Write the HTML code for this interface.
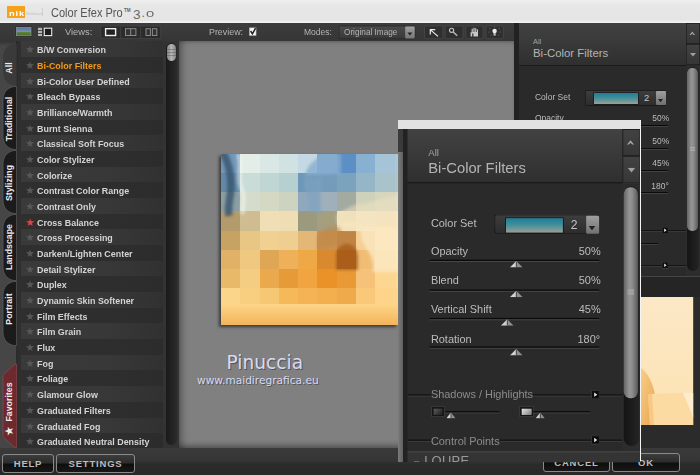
<!DOCTYPE html>
<html><head><meta charset="utf-8"><title>Color Efex Pro 3.0</title>
<style>
html,body{margin:0;padding:0;}
body{width:700px;height:475px;overflow:hidden;position:relative;background:#2a2a2a;font-family:"Liberation Sans",sans-serif;}
.abs{position:absolute;}
#title{left:0;top:0;width:700px;height:23.6px;background:linear-gradient(#efefef,#e7e7e7 25%,#e5e5e5 88%,#f2f2f2 96%);border-bottom:1.2px solid #141414;box-sizing:border-box}
#title .logo{left:7px;top:6px;width:18px;height:12px;background:#f5a21b;}
#title .logo span{position:absolute;left:1.8px;top:5px;color:#fff;font-size:6.4px;font-weight:bold;line-height:6px;letter-spacing:0.6px;transform:scaleX(1.45);transform-origin:0 0}
#title .sw{left:26px;top:10.5px;font-size:4.3px;color:#bcc4cc;line-height:6px}
#title .name{left:51.3px;top:3.6px;font-size:12.3px;line-height:18px;color:#555;white-space:nowrap;transform:scaleX(0.895);transform-origin:0 0}
#title .tm{left:124px;top:6.6px;font-size:4.6px;color:#666;line-height:7px;font-weight:bold}
#title .ver{left:133px;top:3.6px;color:#6a6a6a;white-space:nowrap;line-height:18px;font-size:12px}
#tool{left:0;top:23px;width:513.5px;height:18px;background:linear-gradient(#3c3c3c,#363636);}
.tl{position:absolute;top:26.4px;font-size:9.6px;color:#b4b4b4;white-space:nowrap;line-height:12px;transform-origin:0 0}
#tabs{left:0;top:41px;width:21px;height:409px;background:linear-gradient(#333,#464646 5px);}
.tabt{position:absolute;left:9.2px;transform:translate(-50%,-50%) rotate(-90deg);font-size:8.8px;font-weight:bold;color:#ececec;white-space:nowrap;line-height:10px}
.tab{position:absolute;left:3px;width:15px;background:#1c1c1c;border-radius:8px 0 0 8px;}
.tab span{position:absolute;left:50%;top:50%;transform:translate(-50%,-50%) rotate(-90deg);font-size:9.5px;font-weight:bold;color:#e8e8e8;white-space:nowrap}
#list{left:21px;top:41px;width:144px;height:409px;background:#333;overflow:hidden}
.row{position:absolute;left:21px;width:142px;height:15.68px;background:linear-gradient(90deg,#3a3a3a,#383838 60%,#313131);}
.row.alt{background:linear-gradient(90deg,#2f2f2f,#2e2e2e 60%,#2c2c2c)}
.row .st{position:absolute;left:4.3px;top:2px;font-size:10.5px;color:#585858;line-height:12px;font-family:"DejaVu Sans",sans-serif}
.row.fav .st{color:#d44}
.row .tx{position:absolute;left:16px;top:3px;font-size:9.7px;font-weight:bold;color:#d4d4d4;line-height:12px;white-space:nowrap;transform:scaleX(0.92);transform-origin:0 0}
.row.sel .tx{color:#f39a1b}
#lscroll{left:163px;top:41px;width:16px;height:407px;background:#333;}
#lscroll .trk{left:3px;top:2px;width:11px;height:402px;border-radius:5.5px;background:linear-gradient(90deg,#1a1a1a,#2a2a2a)}
#lscroll .th{left:3.8px;top:3px;width:9.4px;height:17px;border-radius:5px;background:linear-gradient(rgba(0,0,0,0) 5px,rgba(60,60,60,0.35) 5px,rgba(60,60,60,0.35) 6px,rgba(0,0,0,0) 6px,rgba(0,0,0,0) 8px,rgba(60,60,60,0.35) 8px,rgba(60,60,60,0.35) 9px,rgba(0,0,0,0) 9px,rgba(0,0,0,0) 11px,rgba(60,60,60,0.35) 11px,rgba(60,60,60,0.35) 12px,rgba(0,0,0,0) 12px),linear-gradient(90deg,#858585,#b4b4b4 50%,#858585)}
#prev{left:179px;top:41px;width:334.5px;height:407px;background:#808080;box-shadow:inset 7px 0 7px -4px rgba(0,0,0,0.33),inset 0 -6px 6px -4px rgba(0,0,0,0.4),inset 0 4px 5px -4px rgba(0,0,0,0.35)}
#bottom{left:0;top:448px;width:700px;height:27px;background:linear-gradient(#3a3a3a,#363636 45%,#2b2b2b 60%,#292929)}
.btn{position:absolute;height:17px;border:1px solid #8a8a8a;border-radius:3px;background:linear-gradient(#3c3c3c,#2c2c2c 48%,#0e0e0e 52%,#181818);color:#bbb;font-size:9.5px;font-weight:bold;text-align:center;line-height:17px;letter-spacing:0.8px;box-sizing:content-box}
.panel{position:absolute;left:0;top:0;background:#2a2a2a;}
.phead{background:linear-gradient(#424242,#383838 55%,#2f2f2f);border-bottom:1px solid #1a1a1a;box-sizing:border-box}
.pbtn{background:linear-gradient(#424242,#363636);box-shadow:inset 0 0 0 0.7px #1e1e1e}
.lb{position:absolute;left:19.8px;font-size:9.1px;transform:scaleX(0.93);transform-origin:0 0;color:#bcbcbc;line-height:12px;white-space:nowrap}
.lb.dim{color:#8c8c8c}
.lb.dim span{background:#2a2a2a}
.vl{position:absolute;right:30.8px;font-size:9.1px;transform:scaleX(0.93);transform-origin:100% 0;color:#bcbcbc;line-height:12px;white-space:nowrap;text-align:right}
.ln{position:absolute;left:19px;right:31.6px;height:0.8px;background:#0a0a0a;box-shadow:0 0.8px 0 #484848}
.tri{position:absolute;display:block}
.sep{height:0.8px;background:#141414;box-shadow:0 0.8px 0 #3c3c3c}
.dd{background:linear-gradient(#3e3e3e,#2c2c2c);border-radius:2px;box-shadow:inset 0 0 0 0.7px #161616}
.loupe{background:#fde9c4}
.tbtn{position:absolute;top:26px;height:13px;background:#2e2e2e;box-shadow:inset 0 0 0 1px #474747;border-radius:1px}
</style></head><body>
<div id="title" class="abs">
 <div class="abs logo"><span>nik</span></div><div class="abs sw">Software</div>
 <div class="abs" style="left:42px;top:8px;width:1px;height:8px;background:#d0d0d0"></div>
 <div class="abs name">Color Efex Pro</div><div class="abs tm">TM</div>
 <div class="abs ver"><span style="position:relative;top:2.4px;font-size:13.5px">3</span><span style="margin-left:1px">.</span><span style="font-size:9.8px;display:inline-block;transform:scaleX(1.5);transform-origin:0 50%;margin-left:1px">0</span></div>
</div>
<div id="tool" class="abs"></div>
<svg class="abs" style="left:0;top:23px" width="515" height="18" viewBox="0 23 515 18">
 <defs><linearGradient id="lg1" x1="0" y1="0" x2="0" y2="1"><stop offset="0" stop-color="#4b4b4b"/><stop offset="1" stop-color="#383838"/></linearGradient>
 <linearGradient id="lg2" x1="0" y1="0" x2="0" y2="1"><stop offset="0" stop-color="#a0a0a0"/><stop offset="1" stop-color="#767676"/></linearGradient>
 <linearGradient id="sky" x1="0" y1="0" x2="0" y2="1"><stop offset="0" stop-color="#58719c"/><stop offset="0.5" stop-color="#7890b4"/><stop offset="0.55" stop-color="#5e8838"/><stop offset="1" stop-color="#47692c"/></linearGradient></defs>
 <rect x="14.5" y="25.8" width="18.5" height="11.6" rx="1.5" fill="#2e2e2e" stroke="#454545" stroke-width="0.6"/>
 <rect x="16.5" y="27.5" width="14.5" height="8.2" fill="url(#sky)" stroke="#8c96a8" stroke-width="0.7"/>
 <g fill="#b4b4b4"><rect x="38" y="27.8" width="4" height="2.2"/><rect x="38" y="30.8" width="4" height="2.2"/><rect x="38" y="33.8" width="4" height="2.2"/></g>
 <rect x="44.3" y="28.2" width="7.4" height="7.4" fill="#1c1c1c" stroke="#e8e8e8" stroke-width="1.1"/>
 <rect x="100.7" y="26" width="60" height="12.6" rx="1.5" fill="#2b2b2b" stroke="#484848" stroke-width="0.8"/>
 <path d="M120.7 26.5V38.2M140.7 26.5V38.2" stroke="#484848" stroke-width="0.8"/>
 <rect x="105.6" y="28.7" width="10" height="6.8" fill="#222" stroke="#f0f0f0" stroke-width="1.4"/>
 <rect x="125.5" y="28.7" width="10.4" height="6.8" fill="#333" stroke="#8a8a8a" stroke-width="1"/><path d="M130.7 28.5V35.7" stroke="#8a8a8a" stroke-width="1"/>
 <rect x="146" y="28.7" width="4.4" height="6.8" fill="#333" stroke="#8a8a8a" stroke-width="1"/><rect x="152.4" y="28.7" width="4.4" height="6.8" fill="#333" stroke="#8a8a8a" stroke-width="1"/>
 <rect x="249.3" y="27.8" width="6.8" height="7.8" fill="#f4f4f4" stroke="#999" stroke-width="0.5"/>
 <path d="M250.6 31 L252.4 33.8 L255.6 28.2" fill="none" stroke="#222" stroke-width="1.5"/>
 <rect x="339" y="26" width="76" height="12.8" rx="1.5" fill="url(#lg1)" stroke="#2a2a2a" stroke-width="0.8"/>
 <rect x="405.2" y="26.4" width="9.5" height="12" rx="1" fill="url(#lg2)"/>
 <path d="M407.4 32.4 H412.4 L409.9 35.6Z" fill="#222"/>
 <g fill="#2f2f2f" stroke="#4a4a4a" stroke-width="0.8"><rect x="424.6" y="26" width="18.4" height="12.8" rx="1"/><rect x="445.2" y="26" width="17.8" height="12.8" rx="1"/><rect x="465.8" y="26" width="17.4" height="12.8" rx="1"/><rect x="486" y="26" width="17.4" height="12.8" rx="1"/></g>
 <path d="M438 36.4 L430.2 29.6 M430 29.6 H435.2 M430.3 29.2 V34.6" fill="none" stroke="#ececec" stroke-width="1.2"/>
 <circle cx="451.6" cy="30.3" r="2.1" fill="none" stroke="#c4c4c4" stroke-width="1.1"/><path d="M453.2 32 L457.2 35.8" stroke="#b8b8b8" stroke-width="1.5"/>
 <path d="M470.6 32 V36.4 H472.2 V33.6 H473.4 V36.4 H478 V30.2 Q478 29 477 29.2 V32 H476.4 V28.6 Q476 27.6 475.2 28.4 V32 H474.6 V28 Q474 27.2 473.4 28 V32 H472.8 V29 Q472.2 28.2 471.6 29 V32.6 Z" fill="#c8c8c8"/>
 <circle cx="494.6" cy="31" r="2.2" fill="#ececec"/><rect x="493.5" y="33" width="2.2" height="2.6" fill="#bdbdbd"/>
 <g fill="#707070"><circle cx="490" cy="28.6" r="0.6"/><circle cx="499.2" cy="28.6" r="0.6"/><circle cx="489" cy="32" r="0.6"/><circle cx="500.2" cy="32" r="0.6"/><circle cx="494.6" cy="27" r="0.5"/><circle cx="491" cy="35" r="0.5"/><circle cx="498.4" cy="35" r="0.5"/></g>
</svg>
<span class="tl" style="left:343.8px;color:#b4b4b4;transform:scaleX(0.855)">Original Image</span>
<span class="tl" style="left:64.8px;transform:scaleX(0.97)">Views:</span>
<span class="tl" style="left:209px;transform:scaleX(0.925)">Preview:</span>
<span class="tl" style="left:303.8px;transform:scaleX(0.885)">Modes:</span>
<div id="tabs" class="abs"></div>
<svg class="abs" style="left:0;top:41px" width="21" height="409" viewBox="0 41 21 409"><rect x="16.6" y="41" width="4.4" height="409" fill="#2f2f2f"/><rect x="16.4" y="41" width="0.8" height="409" fill="#242424"/><path d="M16.6 44.0 L14 44.0 C8 45.0 3 49.5 3 57.5 L3 72 C3 80 8 84.5 14 85.5 L16.6 85.5Z" fill="#3a3a3a" stroke="none" stroke-width="0.8"/><path d="M16.6 86.5 L14 86.5 C8 87.5 3 92 3 100 L3 136 C3 144 8 148.5 14 149.5 L16.6 149.5Z" fill="#1b1b1b" stroke="#585858" stroke-width="0.8"/><path d="M16.6 150.5 L14 150.5 C8 151.5 3 156 3 164 L3 200 C3 208 8 212.5 14 213.5 L16.6 213.5Z" fill="#1b1b1b" stroke="#585858" stroke-width="0.8"/><path d="M16.6 214.5 L14 214.5 C8 215.5 3 220 3 228 L3 267 C3 275 8 279.5 14 280.5 L16.6 280.5Z" fill="#1b1b1b" stroke="#585858" stroke-width="0.8"/><path d="M16.6 281.5 L14 281.5 C8 282.5 3 287 3 295 L3 332 C3 340 8 344.5 14 345.5 L16.6 345.5Z" fill="#1b1b1b" stroke="#585858" stroke-width="0.8"/><path d="M16.6 364 L14.5 364.5 L3.6 374.5 Q3 375.2 3 376.5 L3 435.5 Q3 436.8 3.8 437.5 L14.5 447 L16.6 447.5Z" fill="#6c2a2f" stroke="#87474b" stroke-width="0.8"/></svg>
<span class="tabt" style="top:67.5px">All</span><span class="tabt" style="top:119.1px">Traditional</span><span class="tabt" style="top:182.5px">Stylizing</span><span class="tabt" style="top:246.5px">Landscape</span><span class="tabt" style="top:308.8px">Portrait</span><span class="tabt" style="top:402.3px">Favorites</span><span class="tabt" style="top:431.3px;left:8.8px;font-size:11.5px;font-family:'DejaVu Sans',sans-serif;font-weight:normal">★</span>
<div id="list" class="abs"></div>
<div class="row" style="top:41.20px"><span class="st">★</span><span class="tx">B/W Conversion</span></div>
<div class="row alt sel" style="top:56.88px"><span class="st">★</span><span class="tx">Bi-Color Filters</span></div>
<div class="row" style="top:72.56px"><span class="st">★</span><span class="tx">Bi-Color User Defined</span></div>
<div class="row alt" style="top:88.24px"><span class="st">★</span><span class="tx">Bleach Bypass</span></div>
<div class="row" style="top:103.92px"><span class="st">★</span><span class="tx">Brilliance/Warmth</span></div>
<div class="row alt" style="top:119.60px"><span class="st">★</span><span class="tx">Burnt Sienna</span></div>
<div class="row" style="top:135.28px"><span class="st">★</span><span class="tx">Classical Soft Focus</span></div>
<div class="row alt" style="top:150.96px"><span class="st">★</span><span class="tx">Color Stylizer</span></div>
<div class="row" style="top:166.64px"><span class="st">★</span><span class="tx">Colorize</span></div>
<div class="row alt" style="top:182.32px"><span class="st">★</span><span class="tx">Contrast Color Range</span></div>
<div class="row" style="top:198.00px"><span class="st">★</span><span class="tx">Contrast Only</span></div>
<div class="row alt fav" style="top:213.68px"><span class="st">★</span><span class="tx">Cross Balance</span></div>
<div class="row" style="top:229.36px"><span class="st">★</span><span class="tx">Cross Processing</span></div>
<div class="row alt" style="top:245.04px"><span class="st">★</span><span class="tx">Darken/Lighten Center</span></div>
<div class="row" style="top:260.72px"><span class="st">★</span><span class="tx">Detail Stylizer</span></div>
<div class="row alt" style="top:276.40px"><span class="st">★</span><span class="tx">Duplex</span></div>
<div class="row" style="top:292.08px"><span class="st">★</span><span class="tx">Dynamic Skin Softener</span></div>
<div class="row alt" style="top:307.76px"><span class="st">★</span><span class="tx">Film Effects</span></div>
<div class="row" style="top:323.44px"><span class="st">★</span><span class="tx">Film Grain</span></div>
<div class="row alt" style="top:339.12px"><span class="st">★</span><span class="tx">Flux</span></div>
<div class="row" style="top:354.80px"><span class="st">★</span><span class="tx">Fog</span></div>
<div class="row alt" style="top:370.48px"><span class="st">★</span><span class="tx">Foliage</span></div>
<div class="row" style="top:386.16px"><span class="st">★</span><span class="tx">Glamour Glow</span></div>
<div class="row alt" style="top:401.84px"><span class="st">★</span><span class="tx">Graduated Filters</span></div>
<div class="row" style="top:417.52px"><span class="st">★</span><span class="tx">Graduated Fog</span></div>
<div class="row alt" style="top:433.20px"><span class="st">★</span><span class="tx">Graduated Neutral Density</span></div>
<div id="lscroll" class="abs"><div class="abs trk"></div><div class="abs th"></div></div>
<div id="prev" class="abs"></div>
<div class="abs" style="left:221px;top:154px;width:177px;height:171px;box-shadow:-2px 2px 3px rgba(0,0,0,0.55)"></div><svg class="abs" style="left:221px;top:154px" width="177" height="171" viewBox="0 0 177 171"><rect x="0" y="0" width="19.5" height="19.5" fill="#7297b8"/><rect x="19" y="0" width="20.5" height="19.5" fill="#e4eee8"/><rect x="39" y="0" width="19.5" height="19.5" fill="#dae8e5"/><rect x="58" y="0" width="19.5" height="19.5" fill="#d1e2e3"/><rect x="77" y="0" width="19.5" height="19.5" fill="#c4d9e3"/><rect x="96" y="0" width="20.5" height="19.5" fill="#82abcd"/><rect x="116" y="0" width="19.5" height="19.5" fill="#5c8fc3"/><rect x="135" y="0" width="19.5" height="19.5" fill="#88b0d0"/><rect x="154" y="0" width="20.5" height="19.5" fill="#a6c4d7"/><rect x="174" y="0" width="3.5" height="19.5" fill="#aac7d8"/><rect x="0" y="19" width="19.5" height="19.5" fill="#6489a8"/><rect x="19" y="19" width="20.5" height="19.5" fill="#cadcd8"/><rect x="39" y="19" width="19.5" height="19.5" fill="#c0d6d4"/><rect x="58" y="19" width="19.5" height="19.5" fill="#b6cfd1"/><rect x="77" y="19" width="19.5" height="19.5" fill="#6e98b7"/><rect x="96" y="19" width="20.5" height="19.5" fill="#739cba"/><rect x="116" y="19" width="19.5" height="19.5" fill="#7ca3bd"/><rect x="135" y="19" width="19.5" height="19.5" fill="#95b6c7"/><rect x="154" y="19" width="20.5" height="19.5" fill="#a8c4ca"/><rect x="174" y="19" width="3.5" height="19.5" fill="#abc6cc"/><rect x="0" y="38" width="19.5" height="19.5" fill="#8a9ea4"/><rect x="19" y="38" width="20.5" height="19.5" fill="#d6dccb"/><rect x="39" y="38" width="19.5" height="19.5" fill="#d5d9c4"/><rect x="58" y="38" width="19.5" height="19.5" fill="#cdd3c0"/><rect x="77" y="38" width="19.5" height="19.5" fill="#8fa8bc"/><rect x="96" y="38" width="20.5" height="19.5" fill="#9fb0ba"/><rect x="116" y="38" width="19.5" height="19.5" fill="#a3aaa0"/><rect x="135" y="38" width="19.5" height="19.5" fill="#cfd2bb"/><rect x="154" y="38" width="20.5" height="19.5" fill="#d6d6bd"/><rect x="174" y="38" width="3.5" height="19.5" fill="#dcd9c0"/><rect x="0" y="57" width="19.5" height="20.5" fill="#b39b6c"/><rect x="19" y="57" width="20.5" height="20.5" fill="#cfbd91"/><rect x="39" y="57" width="19.5" height="20.5" fill="#f0dfb6"/><rect x="58" y="57" width="19.5" height="20.5" fill="#efdeb4"/><rect x="77" y="57" width="19.5" height="20.5" fill="#9b9a7e"/><rect x="96" y="57" width="20.5" height="20.5" fill="#a59e7f"/><rect x="116" y="57" width="19.5" height="20.5" fill="#f5e1b6"/><rect x="135" y="57" width="19.5" height="20.5" fill="#fbe8c3"/><rect x="154" y="57" width="20.5" height="20.5" fill="#fae5bc"/><rect x="174" y="57" width="3.5" height="20.5" fill="#fbe8c0"/><rect x="0" y="77" width="19.5" height="19.5" fill="#c6a362"/><rect x="19" y="77" width="20.5" height="19.5" fill="#e8c684"/><rect x="39" y="77" width="19.5" height="19.5" fill="#f0d192"/><rect x="58" y="77" width="19.5" height="19.5" fill="#efcf91"/><rect x="77" y="77" width="19.5" height="19.5" fill="#e3b877"/><rect x="96" y="77" width="20.5" height="19.5" fill="#cc9050"/><rect x="116" y="77" width="19.5" height="19.5" fill="#c08444"/><rect x="135" y="77" width="19.5" height="19.5" fill="#f5cf94"/><rect x="154" y="77" width="20.5" height="19.5" fill="#fde8c0"/><rect x="174" y="77" width="3.5" height="19.5" fill="#fde9c2"/><rect x="0" y="96" width="19.5" height="19.5" fill="#e0b166"/><rect x="19" y="96" width="20.5" height="19.5" fill="#f0c981"/><rect x="39" y="96" width="19.5" height="19.5" fill="#dfa755"/><rect x="58" y="96" width="19.5" height="19.5" fill="#eeb058"/><rect x="77" y="96" width="19.5" height="19.5" fill="#eea845"/><rect x="96" y="96" width="20.5" height="19.5" fill="#d98a2f"/><rect x="116" y="96" width="19.5" height="19.5" fill="#b4661a"/><rect x="135" y="96" width="19.5" height="19.5" fill="#f1bd74"/><rect x="154" y="96" width="20.5" height="19.5" fill="#fde0a8"/><rect x="174" y="96" width="3.5" height="19.5" fill="#fee3ae"/><rect x="0" y="115" width="19.5" height="19.5" fill="#e9b96a"/><rect x="19" y="115" width="20.5" height="19.5" fill="#f4cd83"/><rect x="39" y="115" width="19.5" height="19.5" fill="#eaa94d"/><rect x="58" y="115" width="19.5" height="19.5" fill="#e59c38"/><rect x="77" y="115" width="19.5" height="19.5" fill="#f0a541"/><rect x="96" y="115" width="20.5" height="19.5" fill="#ea9128"/><rect x="116" y="115" width="19.5" height="19.5" fill="#e99a36"/><rect x="135" y="115" width="19.5" height="19.5" fill="#f6c279"/><rect x="154" y="115" width="20.5" height="19.5" fill="#fdd692"/><rect x="174" y="115" width="3.5" height="19.5" fill="#fdd896"/><rect x="0" y="134" width="19.5" height="19.5" fill="#fad58a"/><rect x="19" y="134" width="20.5" height="19.5" fill="#f8cf80"/><rect x="39" y="134" width="19.5" height="19.5" fill="#f7c873"/><rect x="58" y="134" width="19.5" height="19.5" fill="#f5b959"/><rect x="77" y="134" width="19.5" height="19.5" fill="#f4b455"/><rect x="96" y="134" width="20.5" height="19.5" fill="#f3ae4d"/><rect x="116" y="134" width="19.5" height="19.5" fill="#efaa4b"/><rect x="135" y="134" width="19.5" height="19.5" fill="#f9c878"/><rect x="154" y="134" width="20.5" height="19.5" fill="#fdd48a"/><rect x="174" y="134" width="3.5" height="19.5" fill="#fdd48c"/><rect x="0" y="153" width="19.5" height="18.5" fill="#f9c774"/><rect x="19" y="153" width="20.5" height="18.5" fill="#f9c774"/><rect x="39" y="153" width="19.5" height="18.5" fill="#f9c774"/><rect x="58" y="153" width="19.5" height="18.5" fill="#f9c774"/><rect x="77" y="153" width="19.5" height="18.5" fill="#f9c774"/><rect x="96" y="153" width="20.5" height="18.5" fill="#f9c774"/><rect x="116" y="153" width="19.5" height="18.5" fill="#f9c774"/><rect x="135" y="153" width="19.5" height="18.5" fill="#f9c774"/><rect x="154" y="153" width="20.5" height="18.5" fill="#f9c774"/><rect x="174" y="153" width="3.5" height="18.5" fill="#f9c774"/><defs><filter id="bl2" x="-30%" y="-30%" width="160%" height="160%"><feGaussianBlur stdDeviation="1.6"/></filter><filter id="bl1" x="-30%" y="-30%" width="160%" height="160%"><feGaussianBlur stdDeviation="0.9"/></filter>
<linearGradient id="botg" x1="0" y1="0" x2="0" y2="1"><stop offset="0" stop-color="#fdd58a"/><stop offset="1" stop-color="#f4b45a"/></linearGradient></defs>
<rect x="0" y="150" width="177" height="21" fill="url(#botg)"/>
<g filter="url(#bl2)">
<path d="M1 -3 C9 10 10 22 10 32 C10 44 6 52 8 62" fill="none" stroke="#38546f" stroke-width="7.5" opacity="0.82"/>
<path d="M17 0 C22 12 15 24 21 36 C25 46 20 54 22 60" fill="none" stroke="#f4f8f4" stroke-width="4" opacity="0.6"/>
<path d="M84 22 C86 10 96 4 104 0 L100 0 L120 0 L120 20 Z" fill="#86add0" opacity="0.8"/>
<path d="M84 24 C80 38 92 44 88 56 L100 60 L100 24Z" fill="#7fa2c0" opacity="0.7"/>
<path d="M116 60 C124 56 132 50 140 50 C150 50 156 44 177 42 L177 76 L124 76 C116 72 114 66 116 60Z" fill="#efe2c0" opacity="0.55"/>
<path d="M118 72 C128 66 140 68 140 80 C140 92 150 96 152 110 L152 118 L177 118 L177 72Z" fill="#fbe7c0" opacity="0.8"/>
<path d="M115 100 C117 86 137 86 137 104 L137 116 L115 116Z" fill="#a85c16" opacity="0.8"/>
<path d="M96 82 C100 74 112 70 120 74 L116 92 L96 96Z" fill="#c08848" opacity="0.6"/>
</g></svg>
<div class="abs" style="left:226.5px;top:350.5px;font-size:18.6px;color:#d9d9f2;font-family:'DejaVu Sans',sans-serif;text-shadow:1px 1px 0 #555;line-height:24px">Pinuccia</div>
<div class="abs" style="left:197px;top:372px;font-size:10.6px;color:#d9d9f2;font-family:'DejaVu Sans',sans-serif;text-shadow:1px 1px 0 #555;line-height:16px;white-space:nowrap">www.maidiregrafica.eu</div>
<div class="abs" style="left:513.5px;top:23px;width:2px;height:426px;background:#222"></div>
<div id="right" class="abs panelwrap" style="left:515px;top:23px;width:185.0px;height:452.0px;overflow:hidden">
<div class="panel" style="width:185px;height:452px;transform:scale(1);transform-origin:0 0">
 <div class="abs" style="left:0;top:0;width:3.5px;height:452px;background:#222"></div>
 <div class="abs phead" style="left:3.5px;top:0;width:167.1px;height:42.8px"></div>
 <div class="abs" style="left:18px;top:14.3px;font-size:7.4px;color:#a4a4a4;line-height:9px">All</div>
 <div class="abs" style="left:18px;top:23.3px;font-size:11.4px;color:#b4b4b4;line-height:15px;white-space:nowrap">Bi-Color Filters</div>
 <div class="abs pbtn" style="left:170.6px;top:0;width:14.4px;height:20.6px"><svg class="abs" style="left:3.9px;top:8px" width="6.6" height="4.4" viewBox="0 0 6.6 4.4"><path d="M0.3 4.4 L3.3 0.6 L6.3 4.4 L5 4.4 L3.3 2.6 L1.6 4.4Z" fill="#a8a8a8"/></svg></div>
 <div class="abs pbtn" style="left:170.6px;top:21.2px;width:14.4px;height:20.6px"><svg class="abs" style="left:4.2px;top:9px" width="6" height="3.6" viewBox="0 0 6 3.6"><path d="M0 0 L6 0 L3 3.6Z" fill="#a0a0a0"/></svg></div>
 <div class="abs" style="left:170.6px;top:42.5px;width:14.4px;height:210.5px;background:#2d2d2d"></div>
 <div class="abs" style="left:171.8px;top:44px;width:12px;height:203.5px;border-radius:6px;background:linear-gradient(90deg,#141414,#242424)"></div>
 <div class="abs" style="left:172.4px;top:45.2px;width:10.2px;height:162.5px;border-radius:5.1px;background:linear-gradient(90deg,#646464,#959595 40%,#8c8c8c 60%,#5a5a5a)"></div>
 <div class="abs" style="left:175.0px;top:124px;width:5px;height:0.6px;background:#aaa;box-shadow:0 1.5px 0 #aaa,0 3px 0 #aaa"></div>
 <div class="abs" style="left:0;top:1.1px;width:185px;height:0">
 <div class="lb" style="top:67px">Color Set</div>
 <div class="abs dd" style="left:69.5px;top:66.3px;width:81.7px;height:15.2px"></div>
 <div class="abs" style="left:78.9px;top:69.2px;width:44.5px;height:10.6px;background:linear-gradient(#1f7f98,#3a8c9c 40%,#9aa094);box-shadow:0 0 0 0.6px #111"></div>
 <div class="abs" style="left:129.0px;top:67.6px;font-size:9.4px;color:#c4c4c4;line-height:12px">2</div>
 <div class="abs" style="left:141.3px;top:67.2px;width:9.4px;height:13.6px;background:linear-gradient(#a0a0a0,#707070);border-radius:1px"><svg class="abs" style="left:2.2px;top:7.6px" width="5" height="3.4" viewBox="0 0 5 3.4"><path d="M0 0 L5 0 L2.5 3.4Z" fill="#222"/></svg></div>
 <div class="lb" style="top:88.3px">Opacity</div><div class="vl" style="top:88.3px">50%</div>
<div class="ln" style="top:100.7px"></div>
<svg class="tri" style="left:80.6px;top:102.1px" width="10" height="5" viewBox="0 0 9.4 5.4" preserveAspectRatio="none"><path d="M0 5.4 L4.7 0 L4.7 5.4Z" fill="#d0d0d0"/><path d="M4.7 0 L9.4 5.4 L4.7 5.4Z" fill="#909090"/><path d="M4.7 0.8V5.4" stroke="#222" stroke-width="0.5"/></svg>
 <div class="lb" style="top:111.1px">Blend</div><div class="vl" style="top:111.1px">50%</div>
<div class="ln" style="top:123.5px"></div>
<svg class="tri" style="left:80.6px;top:124.9px" width="10" height="5" viewBox="0 0 9.4 5.4" preserveAspectRatio="none"><path d="M0 5.4 L4.7 0 L4.7 5.4Z" fill="#d0d0d0"/><path d="M4.7 0 L9.4 5.4 L4.7 5.4Z" fill="#909090"/><path d="M4.7 0.8V5.4" stroke="#222" stroke-width="0.5"/></svg>
 <div class="lb" style="top:133.4px">Vertical Shift</div><div class="vl" style="top:133.4px">45%</div>
<div class="ln" style="top:145.8px"></div>
<svg class="tri" style="left:74.3px;top:147.2px" width="10" height="5" viewBox="0 0 9.4 5.4" preserveAspectRatio="none"><path d="M0 5.4 L4.7 0 L4.7 5.4Z" fill="#d0d0d0"/><path d="M4.7 0 L9.4 5.4 L4.7 5.4Z" fill="#909090"/><path d="M4.7 0.8V5.4" stroke="#222" stroke-width="0.5"/></svg>
 <div class="lb" style="top:155.9px">Rotation</div><div class="vl" style="top:155.9px">180°</div>
<div class="ln" style="top:168.3px"></div>
<svg class="tri" style="left:80.6px;top:169.7px" width="10" height="5" viewBox="0 0 9.4 5.4" preserveAspectRatio="none"><path d="M0 5.4 L4.7 0 L4.7 5.4Z" fill="#d0d0d0"/><path d="M4.7 0 L9.4 5.4 L4.7 5.4Z" fill="#909090"/><path d="M4.7 0.8V5.4" stroke="#222" stroke-width="0.5"/></svg>
 </div>
 <div class="abs" style="left:0;top:1.9000000000000001px;width:185px;height:0">
 <div class="abs sep" style="left:3.5px;top:205px;width:167.1px"></div>
 <div class="lb dim" style="top:199.4px"><span>Shadows / Highlights</span></div>
 <svg class="abs" style="left:146.8px;top:201.9px" width="6.2" height="6.6" viewBox="0 0 6.2 6.6"><rect width="6.2" height="6.6" fill="#0c0c0c" stroke="#4a4a4a" stroke-width="0.7"/><path d="M2.2 1.6 L4.6 3.3 L2.2 5Z" fill="#e8e8e8"/></svg>
 <div class="abs" style="left:20.9px;top:214.6px;width:9.6px;height:7.6px;background:linear-gradient(135deg,#5e5e5e,#1c1c1c);border:0.8px solid #141414;box-shadow:0 0 0 0.5px #484848;box-sizing:border-box"></div>
 <div class="abs" style="left:30.7px;top:218.2px;width:42px;height:0.8px;background:#0c0c0c;box-shadow:0 0.8px 0 #444"></div>
 <svg class="tri" style="left:32.3px;top:219.2px" width="7" height="4.6" viewBox="0 0 7 4.6"><path d="M0 4.6 L3.5 0 L3.5 4.6Z" fill="#d0d0d0"/><path d="M3.5 0 L7 4.6 L3.5 4.6Z" fill="#909090"/><path d="M3.5 0.8V4.6" stroke="#222" stroke-width="0.5"/></svg>
 <div class="abs" style="left:89.4px;top:214.6px;width:9.6px;height:7.6px;background:linear-gradient(135deg,#eaeaea,#7a7a7a);border:0.8px solid #141414;box-shadow:0 0 0 0.5px #484848;box-sizing:border-box"></div>
 <div class="abs" style="left:99px;top:218.2px;width:44.3px;height:0.8px;background:#0c0c0c;box-shadow:0 0.8px 0 #444"></div>
 <svg class="tri" style="left:100.5px;top:219.2px" width="7" height="4.6" viewBox="0 0 7 4.6"><path d="M0 4.6 L3.5 0 L3.5 4.6Z" fill="#d0d0d0"/><path d="M3.5 0 L7 4.6 L3.5 4.6Z" fill="#909090"/><path d="M3.5 0.8V4.6" stroke="#222" stroke-width="0.5"/></svg>
 <div class="abs sep" style="left:3.5px;top:240.2px;width:167.1px"></div>
 <div class="lb dim" style="top:234.5px"><span>Control Points</span></div>
 <svg class="abs" style="left:146.8px;top:237.1px" width="6.2" height="6.6" viewBox="0 0 6.2 6.6"><rect width="6.2" height="6.6" fill="#0c0c0c" stroke="#4a4a4a" stroke-width="0.7"/><path d="M2.2 1.6 L4.6 3.3 L2.2 5Z" fill="#e8e8e8"/></svg>
 </div>
 <div class="abs" style="left:3.5px;top:253px;width:181.5px;height:199.0px;background:#2b2b2b"></div>
 <div class="abs" style="left:3.5px;top:253px;width:181.5px;height:20.5px;background:linear-gradient(90deg,#343434 55%,#252525 68%);border-top:0.8px solid #454545;box-sizing:border-box"></div>
 <div class="abs" style="left:6.5px;top:260.8px;width:4.5px;height:1px;background:#aaa"></div>
 <div class="abs" style="left:14.8px;top:255.2px;font-size:10px;color:#999;line-height:12px;letter-spacing:0.2px">LOUPE</div>
 <svg class="abs" style="left:125.4px;top:273.5px" width="53.2" height="128.5" viewBox="0 0 53.2 128.5">
  <defs><linearGradient id="lpright" x1="0" y1="0" x2="0" y2="1"><stop offset="0" stop-color="#fbe8c6"/><stop offset="1" stop-color="#fde2b2"/></linearGradient>
  <linearGradient id="lqright" x1="0" y1="0" x2="1" y2="1"><stop offset="0" stop-color="#f8cf8a"/><stop offset="1" stop-color="#e9a650"/></linearGradient></defs>
  <rect width="53.2" height="128.5" fill="url(#lpright)"/>
  <path d="M0 70 C8 76 13 86 15 98 L15 128.5 L0 128.5Z" fill="url(#lqright)"/>
  <path d="M8 97 L43 96 L53.2 118 L53.2 128.5 L10 128.5Z" fill="#fbdba2"/>
  <path d="M43 96 L53.2 96 L53.2 120Z" fill="#fdeccd"/>
  <path d="M8 97 L12 97 L14 128.5 L10 128.5Z" fill="#f3c27a" opacity="0.7"/>
 </svg>
</div></div>
<div id="bottom" class="abs"></div>
<div class="btn" style="left:2px;top:454px;width:50px">HELP</div>
<div class="btn" style="left:56px;top:454px;width:77px">SETTINGS</div>
<div class="btn" style="left:543px;top:453px;width:65px">CANCEL</div>
<div class="btn" style="left:612px;top:453px;width:66px">OK</div>
<div class="abs" style="left:398px;top:120px;width:243px;height:9px;background:#e2e2e2"></div>
<div class="abs" style="left:398px;top:129px;width:6px;height:23px;background:#3a3a3a"></div>
<div class="abs" style="left:398px;top:152px;width:6px;height:310px;background:linear-gradient(90deg,#7c7c7c,#5a5a5a)"></div>
<div class="abs" style="left:403.2px;top:129px;width:2px;height:333px;background:#222"></div>
<div id="popup" class="abs panelwrap" style="left:404.6px;top:128.6px;width:235.5px;height:333.2px;overflow:hidden">
<div class="panel" style="width:182px;height:257.5px;transform:scale(1.294);transform-origin:0 0">
 <div class="abs" style="left:0;top:0;width:2.2px;height:257.5px;background:#222"></div>
 <div class="abs phead" style="left:2.2px;top:0;width:165.4px;height:42px"></div>
 <div class="abs" style="left:18px;top:14.3px;font-size:7.4px;color:#a4a4a4;line-height:9px">All</div>
 <div class="abs" style="left:18px;top:23.3px;font-size:11.4px;color:#b4b4b4;line-height:15px;white-space:nowrap">Bi-Color Filters</div>
 <div class="abs pbtn" style="left:167.6px;top:0;width:14.4px;height:20.6px"><svg class="abs" style="left:3.9px;top:8px" width="6.6" height="4.4" viewBox="0 0 6.6 4.4"><path d="M0.3 4.4 L3.3 0.6 L6.3 4.4 L5 4.4 L3.3 2.6 L1.6 4.4Z" fill="#a8a8a8"/></svg></div>
 <div class="abs pbtn" style="left:167.6px;top:21.2px;width:14.4px;height:20.6px"><svg class="abs" style="left:4.2px;top:9px" width="6" height="3.6" viewBox="0 0 6 3.6"><path d="M0 0 L6 0 L3 3.6Z" fill="#a0a0a0"/></svg></div>
 <div class="abs" style="left:167.6px;top:42.5px;width:14.4px;height:206.7px;background:#2d2d2d"></div>
 <div class="abs" style="left:168.8px;top:44px;width:12px;height:201px;border-radius:6px;background:linear-gradient(90deg,#141414,#242424)"></div>
 <div class="abs" style="left:169.4px;top:45.2px;width:10.2px;height:162.5px;border-radius:5.1px;background:linear-gradient(90deg,#646464,#959595 40%,#8c8c8c 60%,#5a5a5a)"></div>
 <div class="abs" style="left:172.0px;top:124px;width:5px;height:0.6px;background:#aaa;box-shadow:0 1.5px 0 #aaa,0 3px 0 #aaa"></div>
 <div class="abs" style="left:0;top:0.0px;width:182px;height:0">
 <div class="lb" style="top:67px">Color Set</div>
 <div class="abs dd" style="left:68.5px;top:66.3px;width:81.7px;height:15.2px"></div>
 <div class="abs" style="left:77.9px;top:69.2px;width:44.5px;height:10.6px;background:linear-gradient(#1f7f98,#3a8c9c 40%,#9aa094);box-shadow:0 0 0 0.6px #111"></div>
 <div class="abs" style="left:128.0px;top:67.6px;font-size:9.4px;color:#c4c4c4;line-height:12px">2</div>
 <div class="abs" style="left:140.3px;top:67.2px;width:9.4px;height:13.6px;background:linear-gradient(#a0a0a0,#707070);border-radius:1px"><svg class="abs" style="left:2.2px;top:7.6px" width="5" height="3.4" viewBox="0 0 5 3.4"><path d="M0 0 L5 0 L2.5 3.4Z" fill="#222"/></svg></div>
 <div class="lb" style="top:88.3px">Opacity</div><div class="vl" style="top:88.3px">50%</div>
<div class="ln" style="top:100.7px"></div>
<svg class="tri" style="left:80.6px;top:102.1px" width="10" height="5" viewBox="0 0 9.4 5.4" preserveAspectRatio="none"><path d="M0 5.4 L4.7 0 L4.7 5.4Z" fill="#d0d0d0"/><path d="M4.7 0 L9.4 5.4 L4.7 5.4Z" fill="#909090"/><path d="M4.7 0.8V5.4" stroke="#222" stroke-width="0.5"/></svg>
 <div class="lb" style="top:111.1px">Blend</div><div class="vl" style="top:111.1px">50%</div>
<div class="ln" style="top:123.5px"></div>
<svg class="tri" style="left:80.6px;top:124.9px" width="10" height="5" viewBox="0 0 9.4 5.4" preserveAspectRatio="none"><path d="M0 5.4 L4.7 0 L4.7 5.4Z" fill="#d0d0d0"/><path d="M4.7 0 L9.4 5.4 L4.7 5.4Z" fill="#909090"/><path d="M4.7 0.8V5.4" stroke="#222" stroke-width="0.5"/></svg>
 <div class="lb" style="top:133.4px">Vertical Shift</div><div class="vl" style="top:133.4px">45%</div>
<div class="ln" style="top:145.8px"></div>
<svg class="tri" style="left:74.3px;top:147.2px" width="10" height="5" viewBox="0 0 9.4 5.4" preserveAspectRatio="none"><path d="M0 5.4 L4.7 0 L4.7 5.4Z" fill="#d0d0d0"/><path d="M4.7 0 L9.4 5.4 L4.7 5.4Z" fill="#909090"/><path d="M4.7 0.8V5.4" stroke="#222" stroke-width="0.5"/></svg>
 <div class="lb" style="top:155.9px">Rotation</div><div class="vl" style="top:155.9px">180°</div>
<div class="ln" style="top:168.3px"></div>
<svg class="tri" style="left:80.6px;top:169.7px" width="10" height="5" viewBox="0 0 9.4 5.4" preserveAspectRatio="none"><path d="M0 5.4 L4.7 0 L4.7 5.4Z" fill="#d0d0d0"/><path d="M4.7 0 L9.4 5.4 L4.7 5.4Z" fill="#909090"/><path d="M4.7 0.8V5.4" stroke="#222" stroke-width="0.5"/></svg>
 </div>
 <div class="abs" style="left:0;top:0.0px;width:182px;height:0">
 <div class="abs sep" style="left:2.2px;top:205px;width:165.4px"></div>
 <div class="lb dim" style="top:199.4px"><span>Shadows / Highlights</span></div>
 <svg class="abs" style="left:143.8px;top:201.9px" width="6.2" height="6.6" viewBox="0 0 6.2 6.6"><rect width="6.2" height="6.6" fill="#0c0c0c" stroke="#4a4a4a" stroke-width="0.7"/><path d="M2.2 1.6 L4.6 3.3 L2.2 5Z" fill="#e8e8e8"/></svg>
 <div class="abs" style="left:20.9px;top:214.6px;width:9.6px;height:7.6px;background:linear-gradient(135deg,#5e5e5e,#1c1c1c);border:0.8px solid #141414;box-shadow:0 0 0 0.5px #484848;box-sizing:border-box"></div>
 <div class="abs" style="left:30.7px;top:218.2px;width:42px;height:0.8px;background:#0c0c0c;box-shadow:0 0.8px 0 #444"></div>
 <svg class="tri" style="left:32.3px;top:219.2px" width="7" height="4.6" viewBox="0 0 7 4.6"><path d="M0 4.6 L3.5 0 L3.5 4.6Z" fill="#d0d0d0"/><path d="M3.5 0 L7 4.6 L3.5 4.6Z" fill="#909090"/><path d="M3.5 0.8V4.6" stroke="#222" stroke-width="0.5"/></svg>
 <div class="abs" style="left:89.4px;top:214.6px;width:9.6px;height:7.6px;background:linear-gradient(135deg,#eaeaea,#7a7a7a);border:0.8px solid #141414;box-shadow:0 0 0 0.5px #484848;box-sizing:border-box"></div>
 <div class="abs" style="left:99px;top:218.2px;width:44.3px;height:0.8px;background:#0c0c0c;box-shadow:0 0.8px 0 #444"></div>
 <svg class="tri" style="left:100.5px;top:219.2px" width="7" height="4.6" viewBox="0 0 7 4.6"><path d="M0 4.6 L3.5 0 L3.5 4.6Z" fill="#d0d0d0"/><path d="M3.5 0 L7 4.6 L3.5 4.6Z" fill="#909090"/><path d="M3.5 0.8V4.6" stroke="#222" stroke-width="0.5"/></svg>
 <div class="abs sep" style="left:2.2px;top:240.2px;width:165.4px"></div>
 <div class="lb dim" style="top:234.5px"><span>Control Points</span></div>
 <svg class="abs" style="left:143.8px;top:237.1px" width="6.2" height="6.6" viewBox="0 0 6.2 6.6"><rect width="6.2" height="6.6" fill="#0c0c0c" stroke="#4a4a4a" stroke-width="0.7"/><path d="M2.2 1.6 L4.6 3.3 L2.2 5Z" fill="#e8e8e8"/></svg>
 </div>
 <div class="abs" style="left:2.2px;top:249.2px;width:179.8px;height:8.3px;background:#2b2b2b"></div>
 <div class="abs" style="left:2.2px;top:249.2px;width:179.8px;height:20.5px;background:#343434;border-top:0.8px solid #454545;box-sizing:border-box"></div>
 <div class="abs" style="left:6.5px;top:257.0px;width:4.5px;height:1px;background:#aaa"></div>
 <div class="abs" style="left:14.8px;top:251.4px;font-size:10px;color:#999;line-height:12px;letter-spacing:0.2px">LOUPE</div>
 <svg class="abs" style="left:122.4px;top:269.7px" width="53.2" height="128.5" viewBox="0 0 53.2 128.5">
  <defs><linearGradient id="lppopup" x1="0" y1="0" x2="0" y2="1"><stop offset="0" stop-color="#fbe8c6"/><stop offset="1" stop-color="#fde2b2"/></linearGradient>
  <linearGradient id="lqpopup" x1="0" y1="0" x2="1" y2="1"><stop offset="0" stop-color="#f8cf8a"/><stop offset="1" stop-color="#e9a650"/></linearGradient></defs>
  <rect width="53.2" height="128.5" fill="url(#lppopup)"/>
  <path d="M0 70 C8 76 13 86 15 98 L15 128.5 L0 128.5Z" fill="url(#lqpopup)"/>
  <path d="M8 97 L43 96 L53.2 118 L53.2 128.5 L10 128.5Z" fill="#fbdba2"/>
  <path d="M43 96 L53.2 96 L53.2 120Z" fill="#fdeccd"/>
  <path d="M8 97 L12 97 L14 128.5 L10 128.5Z" fill="#f3c27a" opacity="0.7"/>
 </svg>
</div></div>
<div class="abs" style="left:640px;top:120px;width:1px;height:341px;background:#f4f4f4"></div>
</body></html>
